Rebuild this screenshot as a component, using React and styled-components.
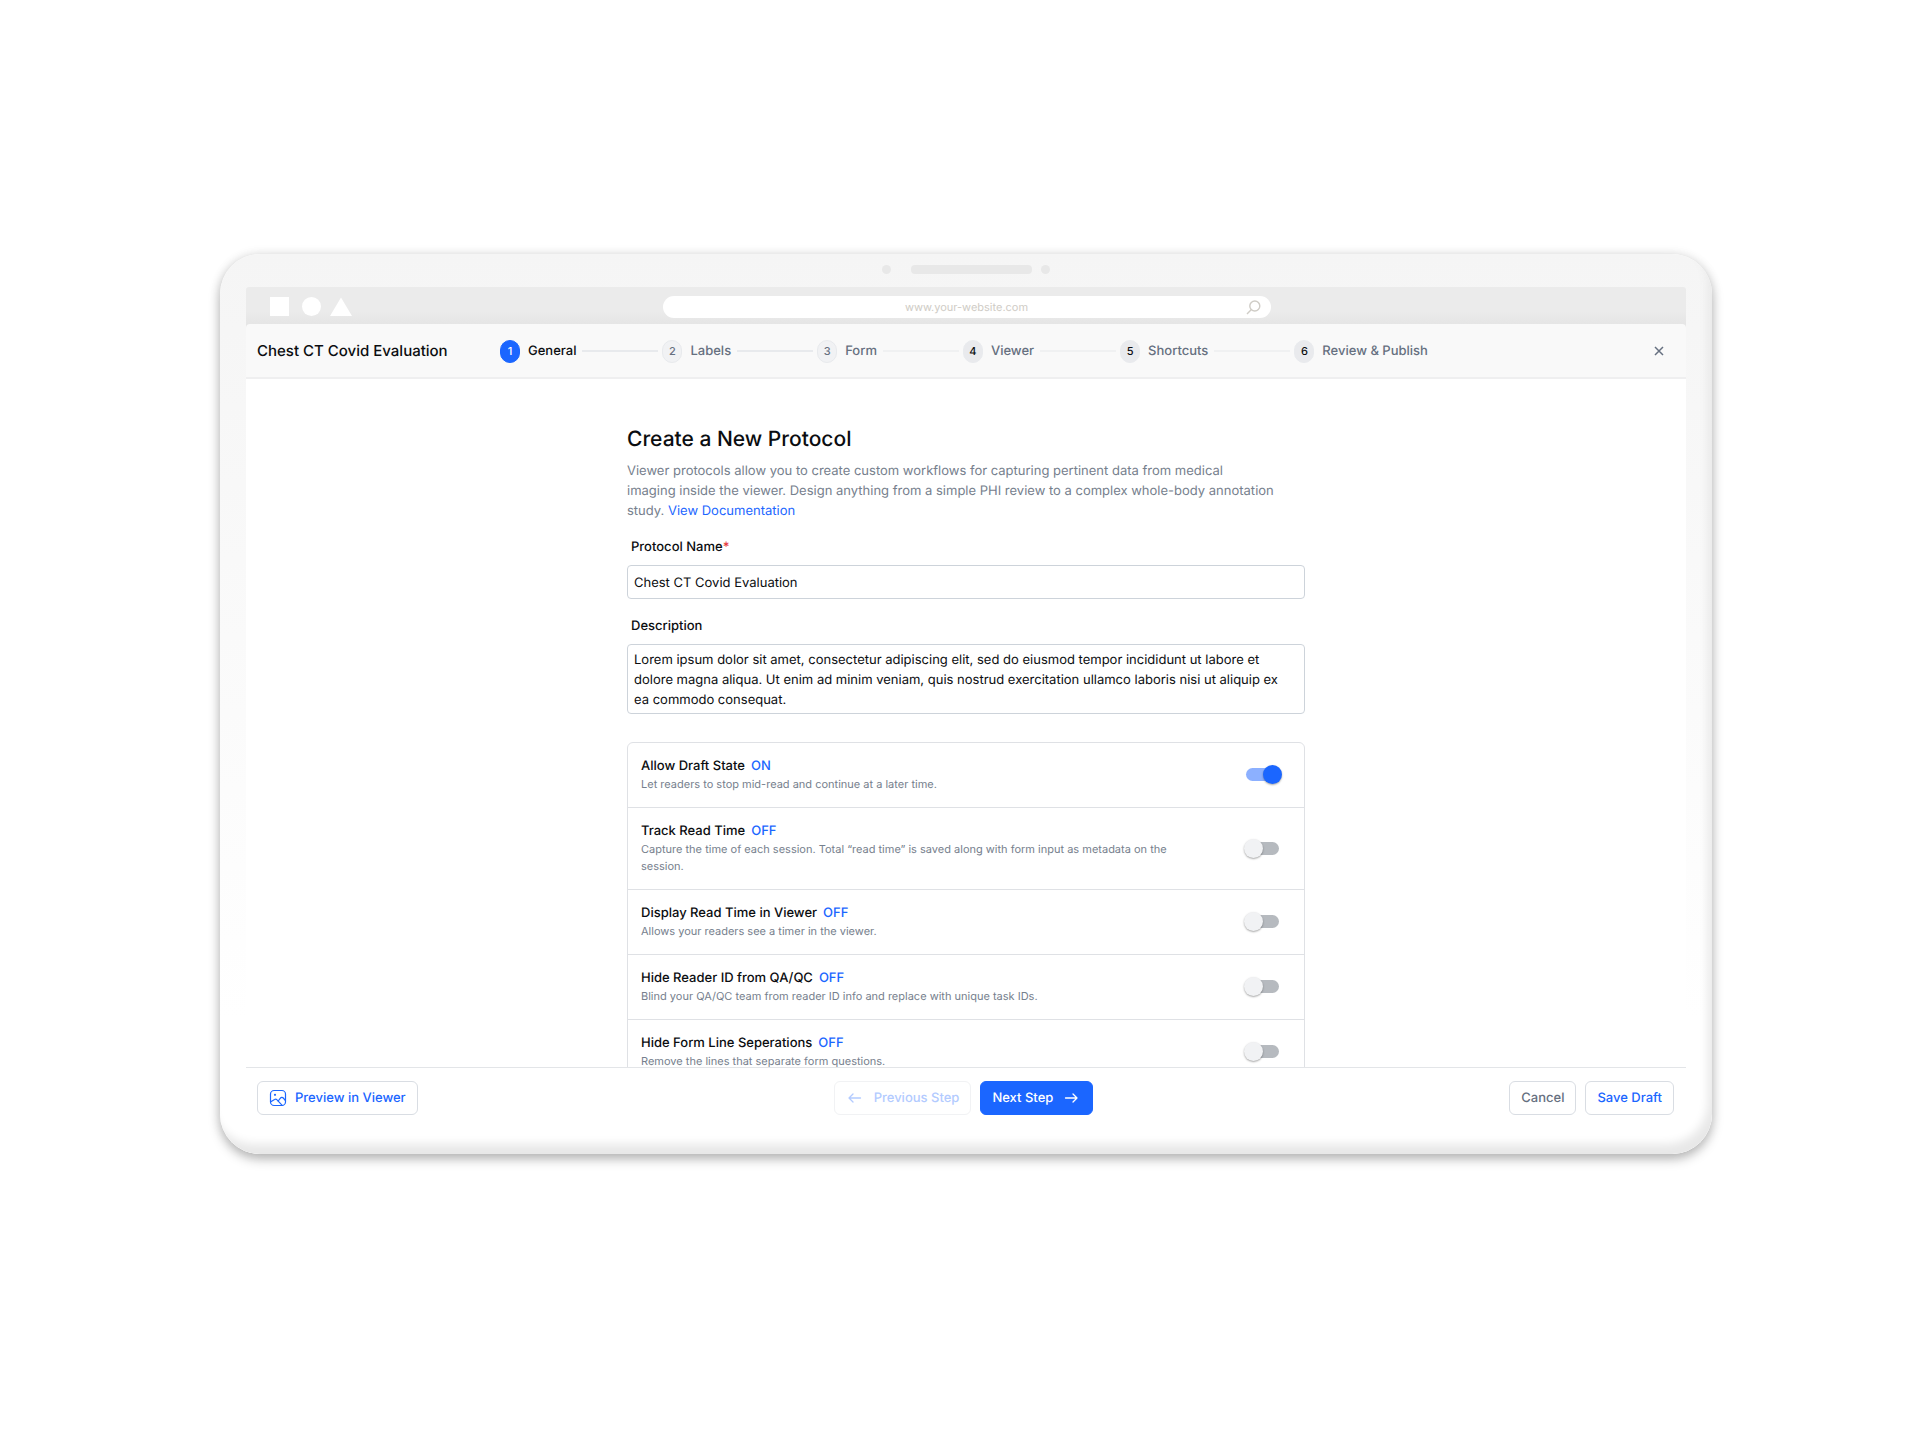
import React, { useState } from "react";
import styled, { createGlobalStyle } from "styled-components";

const GlobalStyle = createGlobalStyle`
  *, *::before, *::after { box-sizing: border-box; }
  body {
    margin: 0;
    background: #fff;
    color: #0b0d10;
    font-family: Inter, "Liberation Sans", sans-serif;
    font-size: 13px;
    line-height: 20px;
    font-optical-sizing: none;
    text-rendering: geometricPrecision;
  }
  button, input, textarea { font: inherit; color: inherit; text-rendering: inherit; }
`;

const Page = styled.div`
  display: flex;
  flex-direction: column;
  min-height: 100vh;
  padding: 254px 220px 296px;
`;

const Device = styled.div`
  display: flex;
  flex-direction: column;
  height: calc(100vh - 550px);
  min-height: 600px;
  padding: 0 26px 39px;
  border-radius: 40px;
  background: linear-gradient(#f5f5f5, #ffffff 85%);
  box-shadow:
    0 5px 12px rgba(0, 0, 0, 0.28),
    0 0 12px rgba(0, 0, 0, 0.08),
    inset -6px -12px 10px -2px #e8e8e8;
`;

const Camera = styled.div`
  flex: none;
  display: flex;
  align-items: center;
  justify-content: center;
  height: 33px;
  padding-bottom: 2px;
`;

const Lens = styled.span`
  width: 9px;
  height: 9px;
  border-radius: 50%;
  background: #e8e8e8;
`;

const Speaker = styled.span`
  width: 121px;
  height: 9px;
  margin: 0 9px 0 20px;
  border-radius: 4px;
  background: #e8e8e8;
`;

const Screen = styled.div`
  flex: 1;
  min-height: 0;
  display: flex;
  flex-direction: column;
  border-radius: 3px 3px 0 0;
  background: linear-gradient(#ebebeb 24px, #e4e4e4 40px, #fff 42px);
`;

const BrowserBar = styled.div`
  flex: none;
  display: grid;
  grid-template-columns: 1fr minmax(0, 608px) 1fr;
  align-items: center;
  height: 37px;
  padding: 3px 22px 0 24px;
`;

const AddressBar = styled.label`
  display: flex;
  align-items: center;
  height: 22px;
  padding: 0 10px 0 24px;
  border-radius: 11px;
  background: #fff;
`;

const Address = styled.input`
  flex: 1;
  min-width: 0;
  padding: 0;
  border: 0;
  outline: 0;
  background: none;
  color: #cfccc6;
  font-size: 11px;
  text-align: center;
`;

const TopBar = styled.header`
  flex: none;
  display: flex;
  align-items: center;
  height: 55px;
  padding: 1px 19px 0 11px;
  border-bottom: 2px solid #efeff0;
  border-radius: 4px 4px 0 0;
  background: #f9f9f9;
`;

const ProtocolTitle = styled.div`
  width: 243px;
  font-size: 15px;
  font-weight: 500;
`;

const Steps = styled.ol`
  display: flex;
  align-items: center;
  margin: 0;
  padding: 0;
  list-style: none;
`;

const Step = styled.li`
  display: flex;
  align-items: center;
  color: ${(p) => (p.$current ? "#0b0d10" : "#667080")};
  font-weight: 500;

  &:not(:last-child)::after {
    content: "";
    width: 76px;
    height: 2px;
    margin: 0 4px 0 6px;
    background: ${(p) => (p.$faint ? "#f0f1f2" : "#e8eaed")};
  }
`;

const badgeColors = {
  current: "border-color: #1b66ff; background: #1b66ff; color: #fff;",
  ready: "border-color: #e8eaed; background: #f1f2f4; color: #667080;",
  locked: "border-color: #e9ebee; background: #e9eaed; color: #0b0d10;",
};

const StepBadge = styled.span`
  width: 20px;
  height: 23px;
  margin-right: 8px;
  border: 1px solid;
  border-radius: 10px;
  font-size: 11px;
  line-height: 21px;
  text-align: center;
  ${(p) => badgeColors[p.$kind]}
`;

const CloseButton = styled.button`
  display: flex;
  margin-left: auto;
  padding: 3px;
  border: 0;
  background: none;
  color: #667080;
`;

const Content = styled.main`
  flex: 1;
  min-height: 0;
  overflow-y: auto;
  scrollbar-width: none;
  background: #fff;
`;

const Form = styled.form`
  display: flex;
  flex-direction: column;
  max-width: 678px;
  margin: 0 auto;
  padding: 45px 0 40px;
`;

const Heading = styled.h1`
  margin: 0;
  font-size: 21px;
  font-weight: 500;
  line-height: 32px;
`;

const Intro = styled.p`
  max-width: 664px;
  margin: 5px 0 16px;
  color: #76808d;
`;

const DocLink = styled.a`
  display: inline-block;
  color: #1b66ff;
  text-decoration: none;
`;

const Label = styled.label`
  padding: 0 4px;
  margin-bottom: 8px;
  font-weight: 500;
`;

const Required = styled.span`
  color: #e5383b;
`;

const fieldFrame = `
  width: 100%;
  border: 1px solid #cdd3da;
  border-radius: 4px;
  outline: 0;
  background: #fff;
`;

const TextInput = styled.input`
  ${fieldFrame}
  height: 34px;
  margin-bottom: 17px;
  padding: 1px 6px 0;
`;

const TextArea = styled.textarea`
  ${fieldFrame}
  display: block;
  height: 70px;
  margin-bottom: 28px;
  padding: 5px 16px 3px 6px;
  resize: none;
  overflow: hidden;
`;

const Options = styled.div`
  border: 1px solid #dfe1e5;
  border-radius: 6px;
`;

const Option = styled.label`
  display: flex;
  align-items: center;
  justify-content: space-between;
  padding: 13px 22px 14px 13px;

  &:not(:last-child) {
    border-bottom: 1px solid #dfe1e5;
  }
`;

const OptionText = styled.span`
  display: block;
  max-width: 552px;
`;

const OptionTitle = styled.span`
  display: block;
  font-weight: 500;
`;

const OptionState = styled.span`
  margin-left: 6px;
  color: #1b66ff;
`;

const OptionHint = styled.span`
  display: block;
  color: #76808d;
  font-size: 11px;
  line-height: 17px;
`;

const Switch = styled.input`
  appearance: none;
  position: relative;
  flex: none;
  display: flex;
  align-items: center;
  width: 38px;
  height: 19px;
  margin: 0;

  &::before {
    content: "";
    flex: 1;
    height: 13px;
    margin: 0 3px 0 2px;
    border-radius: 7px;
    background: ${(p) => (p.checked ? "#8cb0ff" : "#b6babf")};
  }

  &::after {
    content: "";
    position: absolute;
    top: 0;
    left: ${(p) => (p.checked ? "19px" : "0")};
    width: 19px;
    height: 19px;
    border-radius: 50%;
    background: ${(p) => (p.checked ? "#1b66ff" : "#f1f2f4")};
    box-shadow: 0 1px 2px rgba(0, 0, 0, 0.35);
  }
`;

const Footer = styled.footer`
  flex: none;
  display: flex;
  align-items: flex-start;
  justify-content: space-between;
  padding: 13px 12px 0 11px;
  border-top: 1px solid #e3e5e8;
`;

const ButtonGroup = styled.div`
  display: flex;
  gap: 9px;
`;

const buttonColors = {
  outline: "border-color: #d9dde3; background: #fff; color: #1b66ff;",
  quiet: "border-color: #d9dde3; background: #fff; color: #667080;",
  disabled: "border-color: #f1f2f4; background: #fff; color: #b3cbff;",
  primary: "border-color: #1b66ff; background: #1b66ff; color: #fff;",
};

const Button = styled.button`
  display: flex;
  align-items: center;
  gap: 8px;
  height: 34px;
  padding: 0 11px;
  border: 1px solid;
  border-radius: 6px;
  font-weight: 500;
  white-space: nowrap;
  ${(p) => buttonColors[p.$tone]}
`;

const ShapesIcon = () => (
  <svg width="82" height="20" viewBox="0 0 82 20" fill="#fff" aria-hidden="true">
    <rect x="0" y="0" width="19" height="19" />
    <circle cx="41.5" cy="9.5" r="9.5" />
    <path d="M71 0.5 82 19H60Z" />
  </svg>
);

const SearchIcon = () => (
  <svg width="15" height="15" viewBox="0 0 15 15" fill="none" stroke="#cfccc6" strokeWidth="1.4" aria-hidden="true">
    <circle cx="8.8" cy="6" r="5" />
    <path d="M5.4 9.6 1 14" />
  </svg>
);

const CloseIcon = () => (
  <svg width="10" height="10" viewBox="0 0 10 10" fill="none" stroke="currentColor" strokeWidth="1.5" aria-hidden="true">
    <path d="m1 1 8 8M9 1 1 9" />
  </svg>
);

const ImageIcon = () => (
  <svg width="18" height="18" viewBox="0 0 18 18" fill="none" stroke="currentColor" strokeWidth="1.2" strokeLinecap="round" strokeLinejoin="round" aria-hidden="true">
    <rect x="1.5" y="1.5" width="15" height="15" rx="3.6" />
    <circle cx="6" cy="5.8" r="0.5" />
    <path d="M1.8 12.8 5.6 10.4a1.6 1.6 0 0 1 2.2.3l5.4 5.7" />
    <path d="m9.2 12 2.2-2.9a1.9 1.9 0 0 1 2.9-.1l2.1 2.6" />
  </svg>
);

const ArrowIcon = ({ left }) => (
  <svg width="20" height="14" viewBox="0 0 20 14" fill="none" stroke="currentColor" strokeWidth="1.3" strokeLinecap="round" strokeLinejoin="round" aria-hidden="true">
    <path d={left ? "M14.5 7H3M7 3 3 7l4 4" : "M4.5 7H16M12 3l4 4-4 4"} />
  </svg>
);

const steps = [
  { label: "General", kind: "current" },
  { label: "Labels", kind: "ready" },
  { label: "Form", kind: "ready" },
  { label: "Viewer", kind: "locked" },
  { label: "Shortcuts", kind: "locked" },
  { label: "Review & Publish", kind: "locked" },
];

const initialOptions = [
  { title: "Allow Draft State", hint: "Let readers to stop mid-read and continue at a later time.", on: true },
  {
    title: "Track Read Time",
    hint: "Capture the time of each session. Total “read time” is saved along with form input as metadata on the session.",
    on: false,
  },
  { title: "Display Read Time in Viewer", hint: "Allows your readers see a timer in the viewer.", on: false },
  { title: "Hide Reader ID from QA/QC", hint: "Blind your QA/QC team from reader ID info and replace with unique task IDs.", on: false },
  { title: "Hide Form Line Seperations", hint: "Remove the lines that separate form questions.", on: false },
];

const lorem =
  "Lorem ipsum dolor sit amet, consectetur adipiscing elit, sed do eiusmod tempor incididunt ut labore et dolore magna aliqua. Ut enim ad minim veniam, quis nostrud exercitation ullamco laboris nisi ut aliquip ex ea commodo consequat.";

export default function App() {
  const [options, setOptions] = useState(initialOptions);
  const toggle = (index) =>
    setOptions((list) => list.map((o, i) => (i === index ? { ...o, on: !o.on } : o)));

  return (
    <>
      <GlobalStyle />
      <Page>
        <Device>
          <Camera>
            <Lens />
            <Speaker />
            <Lens />
          </Camera>
          <Screen>
            <BrowserBar>
              <ShapesIcon />
              <AddressBar>
                <Address aria-label="Address" defaultValue="www.your-website.com" />
                <SearchIcon />
              </AddressBar>
            </BrowserBar>
            <TopBar>
              <ProtocolTitle>Chest CT Covid Evaluation</ProtocolTitle>
              <Steps>
                {steps.map((step, i) => (
                  <Step key={step.label} $current={step.kind === "current"} $faint={i > 1}>
                    <StepBadge $kind={step.kind}>{i + 1}</StepBadge>
                    {step.label}
                  </Step>
                ))}
              </Steps>
              <CloseButton type="button" aria-label="Close">
                <CloseIcon />
              </CloseButton>
            </TopBar>
            <Content>
              <Form>
                <Heading>Create a New Protocol</Heading>
                <Intro>
                  Viewer protocols allow you to create custom workflows for capturing pertinent data from medical
                  <br />
                  imaging inside the viewer. Design anything from a simple PHI review to a complex whole-body
                  annotation study. <DocLink href="#docs">View Documentation</DocLink>
                </Intro>
                <Label htmlFor="protocol-name">
                  Protocol Name<Required>*</Required>
                </Label>
                <TextInput id="protocol-name" defaultValue="Chest CT Covid Evaluation" />
                <Label htmlFor="description">Description</Label>
                <TextArea id="description" defaultValue={lorem} spellCheck={false} />
                <Options>
                  {options.map((option, i) => (
                    <Option key={option.title}>
                      <OptionText>
                        <OptionTitle>
                          {option.title}
                          <OptionState>{option.on ? "ON" : "OFF"}</OptionState>
                        </OptionTitle>
                        <OptionHint>{option.hint}</OptionHint>
                      </OptionText>
                      <Switch type="checkbox" checked={option.on} onChange={() => toggle(i)} />
                    </Option>
                  ))}
                </Options>
              </Form>
            </Content>
            <Footer>
              <Button type="button" $tone="outline">
                <ImageIcon />
                Preview in Viewer
              </Button>
              <ButtonGroup>
                <Button type="button" $tone="disabled" disabled>
                  <ArrowIcon left />
                  Previous Step
                </Button>
                <Button type="button" $tone="primary">
                  Next Step
                  <ArrowIcon />
                </Button>
              </ButtonGroup>
              <ButtonGroup>
                <Button type="button" $tone="quiet">Cancel</Button>
                <Button type="button" $tone="outline">Save Draft</Button>
              </ButtonGroup>
            </Footer>
          </Screen>
        </Device>
      </Page>
    </>
  );
}
